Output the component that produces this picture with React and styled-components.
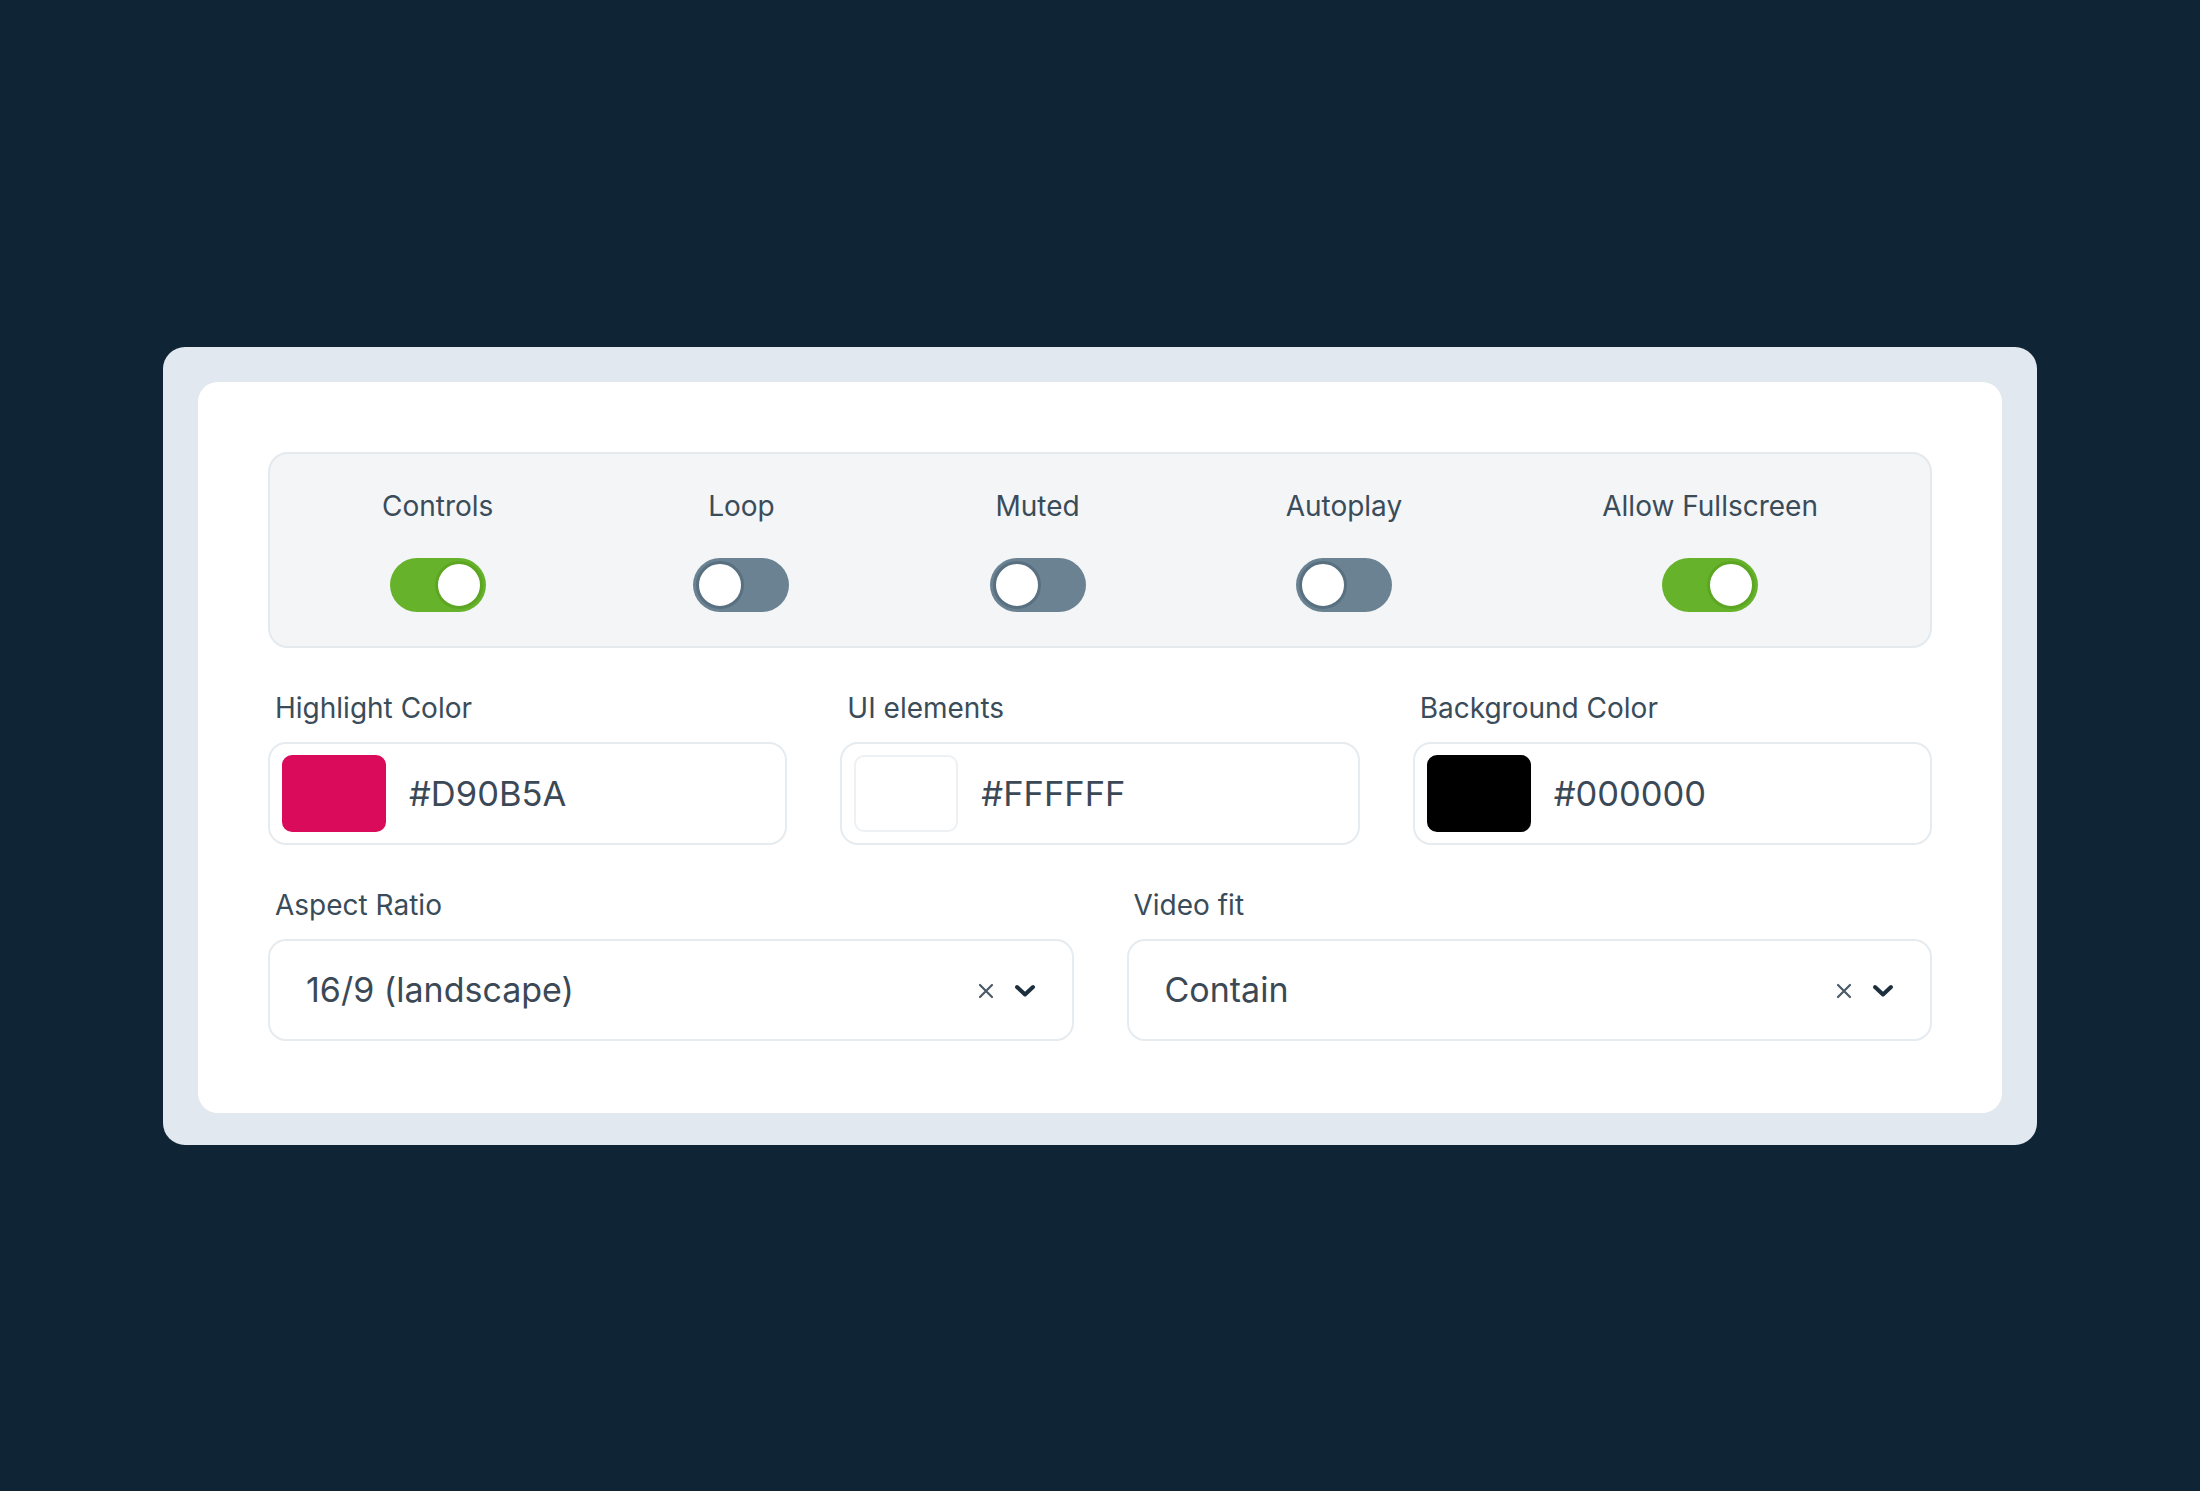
import styled, { createGlobalStyle } from "styled-components";

const GlobalStyle = createGlobalStyle`
  html, body {
    margin: 0;
    padding: 0;
    background: #0f2536;
  }
  body {
    font-family: Inter, "Noto Sans", "Liberation Sans", sans-serif;
  }
`;

const toggles = [
  { label: "Controls", on: true },
  { label: "Loop", on: false },
  { label: "Muted", on: false },
  { label: "Autoplay", on: false },
  { label: "Allow Fullscreen", on: true },
];

const colors = [
  { label: "Highlight Color", value: "#D90B5A", swatch: "#D90B5A" },
  { label: "UI elements", value: "#FFFFFF", swatch: "#FFFFFF" },
  { label: "Background Color", value: "#000000", swatch: "#000000" },
];

const selects = [
  { label: "Aspect Ratio", value: "16/9 (landscape)" },
  { label: "Video fit", value: "Contain" },
];

const ClearIcon = () => (
  <svg width="20" height="20" viewBox="0 0 20 20" fill="none">
    <path d="M4 4L16 16M16 4L4 16" stroke="#4b5a66" strokeWidth="2.2" strokeLinecap="round" />
  </svg>
);

const ChevronIcon = () => (
  <svg width="22" height="14" viewBox="0 0 22 14" fill="none">
    <path d="M3 3L11 10.5L19 3" stroke="#1d2f3d" strokeWidth="4" strokeLinecap="round" strokeLinejoin="round" />
  </svg>
);

const App = () => {
  return (
    <Page>
      <GlobalStyle />
      <Frame>
        <Panel>
          <ToggleBar>
            {toggles.map((t) => (
              <ToggleItem key={t.label}>
                <ToggleLabel>{t.label}</ToggleLabel>
                <Switch $on={t.on}>
                  <Knob $on={t.on} />
                </Switch>
              </ToggleItem>
            ))}
          </ToggleBar>

          <Row $cols={3}>
            {colors.map((c) => (
              <Field key={c.label}>
                <FieldLabel>{c.label}</FieldLabel>
                <InputBox>
                  <Swatch $color={c.swatch} />
                  <ValueText>{c.value}</ValueText>
                </InputBox>
              </Field>
            ))}
          </Row>

          <Row $cols={2}>
            {selects.map((s) => (
              <Field key={s.label}>
                <FieldLabel>{s.label}</FieldLabel>
                <SelectBox>
                  <SelectText>{s.value}</SelectText>
                  <SelectIcons>
                    <ClearIcon />
                    <ChevronIcon />
                  </SelectIcons>
                </SelectBox>
              </Field>
            ))}
          </Row>
        </Panel>
      </Frame>
    </Page>
  );
};
export default App;

const Page = styled.div`
  width: 2200px;
  height: 1491px;
  display: flex;
  align-items: center;
  justify-content: center;
  background: #0f2536;
`;

const Frame = styled.div`
  width: 1874px;
  box-sizing: border-box;
  padding: 35px 35px 32px;
  background: #e2e8ef;
  border-radius: 22px;
`;

const Panel = styled.div`
  background: #ffffff;
  border-radius: 20px;
  padding: 70px 70px 72px;
  display: flex;
  flex-direction: column;
  gap: 44px;
`;

const ToggleBar = styled.div`
  height: 196px;
  box-sizing: border-box;
  display: flex;
  justify-content: space-around;
  align-items: center;
  padding: 0 12px;
  background: #f3f5f7;
  border: 2px solid #e4e9ee;
  border-radius: 20px;
`;

const ToggleItem = styled.div`
  display: flex;
  flex-direction: column;
  align-items: center;
  gap: 35px;
  padding-top: 2px;
`;

const ToggleLabel = styled.span`
  font-size: 28px;
  line-height: 34px;
  color: #3a4c59;
`;

const Switch = styled.div`
  width: 96px;
  height: 54px;
  box-sizing: border-box;
  padding: 3px;
  border-radius: 27px;
  display: flex;
  justify-content: ${(p) => (p.$on ? "flex-end" : "flex-start")};
  background: ${(p) => (p.$on ? "#66b22b" : "#6a8292")};
`;

const Knob = styled.div`
  width: 48px;
  height: 48px;
  box-sizing: border-box;
  border-radius: 50%;
  background: #ffffff;
  border: 3px solid ${(p) => (p.$on ? "#5da624" : "#587080")};
`;

const Row = styled.div`
  display: grid;
  grid-template-columns: repeat(${(p) => p.$cols}, 1fr);
  column-gap: 53px;
`;

const Field = styled.div`
  display: flex;
  flex-direction: column;
  gap: 17px;
`;

const FieldLabel = styled.span`
  font-size: 28px;
  line-height: 33px;
  color: #3a4c59;
  padding-left: 7px;
`;

const InputBox = styled.div`
  height: 103px;
  box-sizing: border-box;
  display: flex;
  align-items: center;
  gap: 23px;
  padding: 0 12px;
  border: 2px solid #e6ebef;
  border-radius: 18px;
  background: #ffffff;
`;

const Swatch = styled.div`
  width: 104px;
  height: 77px;
  flex-shrink: 0;
  box-sizing: border-box;
  border-radius: 10px;
  background: ${(p) => p.$color};
  border: ${(p) => (p.$color === "#FFFFFF" ? "2px solid #eef1f4" : "none")};
`;

const ValueText = styled.span`
  font-size: 34.5px;
  color: #3b4957;
`;

const SelectBox = styled.div`
  height: 102px;
  box-sizing: border-box;
  display: flex;
  align-items: center;
  justify-content: space-between;
  padding: 0 36px 0 36px;
  border: 2px solid #e6ebef;
  border-radius: 18px;
  background: #ffffff;
`;

const SelectText = styled.span`
  font-size: 34px;
  color: #3b4957;
`;

const SelectIcons = styled.div`
  display: flex;
  align-items: center;
  gap: 18px;
  padding-top: 2px;
`;
